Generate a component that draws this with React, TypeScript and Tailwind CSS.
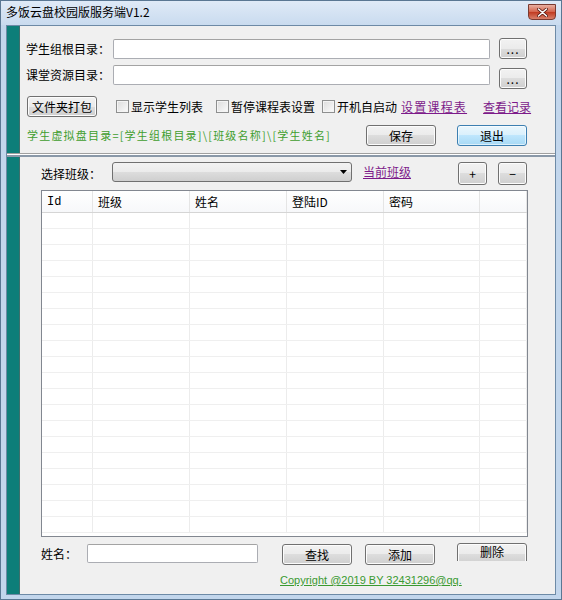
import React from "react";

const cjk = { fontFamily: '"Noto Sans CJK SC", "Noto Sans", sans-serif' };

function WinButton({
  label,
  width,
  height = 21,
  primary,
  className = "",
}: {
  label: string;
  width: number;
  height?: number;
  primary?: boolean;
  className?: string;
}) {
  return (
    <div
      className={`flex items-center justify-center rounded-[3px] border text-[12px] text-black shrink-0 ${
        primary
          ? "border-[#3c7fb1] bg-[linear-gradient(#eaf6fd_0%,#d9f0fc_50%,#bee6fd_50%,#a7d9f5_100%)] shadow-[inset_0_0_0_1px_#ffffff99]"
          : "border-[#707070] bg-[linear-gradient(#f2f2f2_0%,#ebebeb_50%,#dddddd_50%,#cfcfcf_100%)] shadow-[inset_0_0_0_1px_#fcfcfc]"
      } ${className}`}
      style={{ width, height }}
    >
      {label}
    </div>
  );
}

function CheckItem({ label, className = "" }: { label: string; className?: string }) {
  return (
    <div className={`flex items-center ${className}`}>
      <div className="w-[13px] h-[13px] border border-[#8e8f8f] bg-[linear-gradient(135deg,#dcdcdc,#fbfbfb)] shadow-[inset_0_0_0_1px_#f4f4f4]" />
      <span className="ml-[2px] text-[12px] leading-none">{label}</span>
    </div>
  );
}

function TextBox({ width, height = 20 }: { width: number; height?: number }) {
  return (
    <div
      className="bg-white border border-[#abadb3] border-t-[#a3a3a3] rounded-[2px] shrink-0"
      style={{ width, height }}
    />
  );
}

const columns = [
  { name: "Id", w: 51, mono: true },
  { name: "班级", w: 97 },
  { name: "姓名", w: 97 },
  { name: "登陆ID", w: 97 },
  { name: "密码", w: 96 },
  { name: "", w: 47 },
];

const rows = Array.from({ length: 20 }, (_, i) => i);

export default function App() {
  return (
    <div
      className="w-[562px] h-[600px] bg-[#c2d6ec] border border-[#5a7793] flex flex-col text-black overflow-hidden"
      style={cjk}
    >
      {/* title bar */}
      <div className="h-[24px] flex items-start bg-[linear-gradient(#dfeaf7,#c9dbef)] relative">
        <span className="ml-[5px] mt-[5px] text-[12px] leading-none">多饭云盘校园版服务端V1.2</span>
        <div className="absolute right-[5px] top-[3px] w-[28px] h-[16px] rounded-b-[4px] border border-[#7a3a30] bg-[linear-gradient(#e8b0a2,#d4624a_50%,#c03a20_51%,#d8806a)] flex items-center justify-center">
          <svg width="11" height="9" viewBox="0 0 11 9">
            <path d="M1.5 1 L9.5 8 M9.5 1 L1.5 8" stroke="#5a1a10" strokeWidth="3" strokeLinecap="round" />
            <path d="M1.5 1 L9.5 8 M9.5 1 L1.5 8" stroke="#ffffff" strokeWidth="1.6" strokeLinecap="round" />
          </svg>
        </div>
      </div>

      {/* client area */}
      <div className="flex-1 mx-[5px] mb-[4px] border border-[#6d8aa6] bg-[#f0f0f0] flex flex-col">
        {/* top panel */}
        <div className="h-[127px] flex">
          <div className="w-[13px] bg-[#0d7e79] border-r border-[#3f6f6c]" />
          <div className="flex-1 flex flex-col pl-[6px]">
            <div className="mt-[12px] flex items-center h-[21px]">
              <span className="w-[87px] text-[12px] leading-none">学生组根目录：</span>
              <TextBox width={377} />
              <WinButton label="..." width={28} height={21} className="ml-[9px] text-[#666] tracking-[1px] text-[10px]" />
            </div>
            <div className="mt-[6px] flex h-[24px]">
              <span className="w-[87px] text-[12px] leading-none mt-[4px]">课堂资源目录：</span>
              <TextBox width={377} />
              <WinButton label="..." width={28} height={21} className="ml-[9px] mt-[3px] text-[#666] tracking-[1px] text-[10px]" />
            </div>
            <div className="mt-[7px] flex items-center h-[21px]">
              <WinButton label="文件夹打包" width={70} className="ml-[1px]" />
              <CheckItem label="显示学生列表" className="ml-[19px]" />
              <CheckItem label="暂停课程表设置" className="ml-[13px]" />
              <CheckItem label="开机自启动" className="ml-[7px]" />
              <span className="ml-[4px] text-[12px] leading-none text-[#7d1a8a] underline tracking-[1.2px]">设置课程表</span>
              <span className="ml-[16px] text-[12px] leading-none text-[#7d1a8a] underline">查看记录</span>
            </div>
            <div className="mt-[8px] flex items-center h-[21px]">
              <span className="ml-[1px] w-[339px] text-[11px] leading-none text-[#3f9e2e] tracking-[1.2px]">
                学生虚拟盘目录=[学生组根目录]\[班级名称]\[学生姓名]
              </span>
              <WinButton label="保存" width={70} />
              <WinButton label="退出" width={70} primary className="ml-[21px]" />
            </div>
          </div>
        </div>

        {/* divider */}
        <div className="h-[4px] border-t border-[#a0a0a0] border-b-2 border-b-[#8a98a8] bg-white" />

        {/* bottom panel */}
        <div className="flex-1 flex">
          <div className="w-[13px] bg-[#0d7e79] border-r border-[#3f6f6c]" />
          <div className="flex-1 flex flex-col pl-[21px]">
            <div className="mt-[5px] flex items-center h-[23px]">
              <span className="w-[71px] text-[12px] leading-none">选择班级：</span>
              <div className="w-[240px] h-[20px] self-start rounded-[3px] border border-[#707070] bg-[linear-gradient(#f2f2f2_0%,#ebebeb_50%,#dddddd_50%,#cfcfcf_100%)] flex items-center justify-end pr-[4px]">
                <svg width="7" height="4" viewBox="0 0 7 4">
                  <path d="M0 0 L7 0 L3.5 4 Z" fill="#000" />
                </svg>
              </div>
              <span className="ml-[11px] self-start mt-[4px] text-[12px] leading-none text-[#7d1a8a] underline">当前班级</span>
              <WinButton label="+" width={29} height={23} className="ml-[47px]" />
              <WinButton label="−" width={29} height={23} className="ml-[11px]" />
            </div>

            {/* grid */}
            <div className="mt-[5px] w-[487px] h-[347px] border border-[#828790] bg-white overflow-hidden">
              <div className="flex h-[22px] border-b border-[#d5d5d5] bg-[linear-gradient(#ffffff,#f7f8fa)]">
                {columns.map((c, i) => (
                  <div
                    key={i}
                    className="border-r border-[#e5e5e5] flex items-center pl-[5px] text-[12px] leading-none shrink-0"
                    style={{
                      width: c.w,
                      fontFamily: c.mono ? '"Liberation Mono", monospace' : undefined,
                    }}
                  >
                    {c.name}
                  </div>
                ))}
              </div>
              {rows.map(r => (
                <div key={r} className="flex h-[16px] border-b border-[#efefef]">
                  {columns.map((c, i) => (
                    <div key={i} className="border-r border-[#ececec] shrink-0" style={{ width: c.w }} />
                  ))}
                </div>
              ))}
            </div>

            <div className="mt-[7px] flex items-start h-[22px]">
              <span className="w-[46px] mt-[4px] text-[12px] leading-none">姓名：</span>
              <TextBox width={171} height={19} />
              <WinButton label="查找" width={70} className="ml-[24px]" />
              <WinButton label="添加" width={70} className="ml-[13px]" />
              <div className="ml-[22px] -mt-[1px] h-[18px] overflow-hidden">
                <WinButton label="删除" width={70} height={22} className="pb-[4px]" />
              </div>
            </div>
            <div className="mt-[8px] flex h-[13px] items-center pl-[239px]">
              <span
                className="text-[11px] leading-none text-[#3a9a30] underline"
                style={{ fontFamily: '"Liberation Sans", Arial, sans-serif' }}
              >
                Copyright @2019 BY 32431296@qq.
              </span>
            </div>
          </div>
        </div>
      </div>
    </div>
  );
}
